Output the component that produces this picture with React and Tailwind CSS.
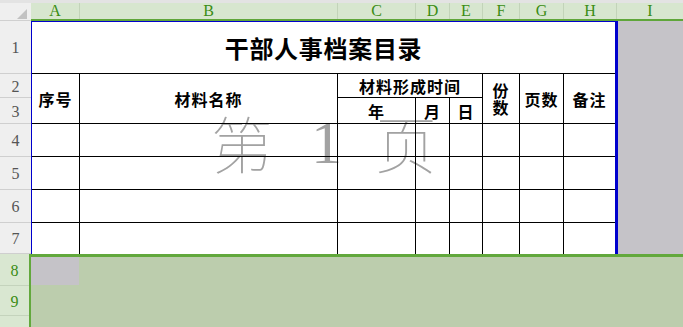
export default function App() {
  const headers = [
    { l: 'A', w: 'w-[49px]' },
    { l: 'B', w: 'w-[258px]' },
    { l: 'C', w: 'w-[78px]' },
    { l: 'D', w: 'w-[34px]' },
    { l: 'E', w: 'w-[33px]' },
    { l: 'F', w: 'w-[37px]' },
    { l: 'G', w: 'w-[44px]' },
    { l: 'H', w: 'w-[53px]' },
  ];
  const rowHeads = [
    { n: '1', h: 'h-[53px]' },
    { n: '2', h: 'h-[24px]' },
    { n: '3', h: 'h-[26px]' },
    { n: '4', h: 'h-[33px]' },
    { n: '5', h: 'h-[33px]' },
    { n: '6', h: 'h-[33px]' },
    { n: '7', h: 'h-[31px]' },
  ];
  const cjk = "font-['Noto_Sans_CJK_SC',sans-serif]";
  const lbl = "font-['Liberation_Serif',serif]";
  const cell = 'border-r border-b border-black';
  const head = `flex items-center justify-center text-[16px] font-bold tracking-[1px] text-black ${cjk}`;
  const bodyRows = [4, 5, 6, 7];
  const rowStart = { 4: 'row-start-4', 5: 'row-start-5', 6: 'row-start-6', 7: 'row-start-7' };

  return (
    <div className="relative w-[683px] h-[327px] overflow-hidden bg-white">
      {/* watermark (painted under the grid lines) */}
      <div className="absolute z-0 left-[211px] top-[111px] flex items-start text-[62px] leading-none text-[#a2a2a2] pointer-events-none">
        <span className={`${cjk} font-thin`}>第</span>
        <span className="ml-[38px] font-['Liberation_Serif',serif] font-normal">1</span>
        <span className={`ml-[33px] ${cjk} font-thin`}>页</span>
      </div>

      {/* top strip */}
      <div className="h-[3px] bg-[#e3e3e3]" />
      {/* column header */}
      <div className="flex h-[18px]">
        <div className="w-[31px] h-full bg-[#efefef] border-b border-[#d0d0d0] flex items-start justify-end pr-[4px] pt-[6px]">
          <svg width="10" height="10" viewBox="0 0 10 10">
            <polygon points="10,0 10,10 0,10" fill="#c2c2c2" />
          </svg>
        </div>
        <div className="flex flex-1 bg-[#d7e6cf] border-b-2 border-[#5fa63a]">
          {headers.map((c) => (
            <div
              key={c.l}
              className={`${c.w} h-full border-r border-[#c2d3b9] flex items-center justify-center text-[16px] leading-none text-[#3a8c14] ${lbl}`}
            >
              {c.l}
            </div>
          ))}
          <div className={`flex-1 h-full flex items-center justify-center text-[16px] leading-none text-[#3a8c14] ${lbl}`}>
            I
          </div>
        </div>
      </div>

      {/* rows 1-7 */}
      <div className="flex h-[233px]">
        <div className="w-[31px] flex flex-col bg-[#efefef]">
          {rowHeads.map((r) => (
            <div
              key={r.n}
              className={`${r.h} border-b border-[#cfcfcf] flex items-center justify-center pt-[2px] text-[16px] leading-none text-[#555] ${lbl}`}
            >
              {r.n}
            </div>
          ))}
        </div>

        <div className="relative z-10 w-[587px] border-l border-t border-r-[3px] border-l-[#0000cc] border-t-[#0000cc] border-r-[#0000cc] grid grid-cols-[48px_258px_78px_34px_33px_37px_44px_51px] grid-rows-[52px_24px_26px_33px_33px_33px_31px]">
          <div className={`col-start-1 col-span-8 row-start-1 border-b border-black flex items-center justify-center text-[24px] font-bold tracking-[0.7px] text-black ${cjk}`}>
            干部人事档案目录
          </div>
          <div className={`col-start-1 row-start-2 row-span-2 ${cell} ${head}`}>序号</div>
          <div className={`col-start-2 row-start-2 row-span-2 ${cell} ${head}`}>材料名称</div>
          <div className={`col-start-3 col-span-3 row-start-2 ${cell} ${head}`}>材料形成时间</div>
          <div className={`col-start-6 row-start-2 row-span-2 ${cell} ${head} flex-col leading-[17px]`}>
            <span>份</span>
            <span>数</span>
          </div>
          <div className={`col-start-7 row-start-2 row-span-2 ${cell} ${head}`}>页数</div>
          <div className={`col-start-8 row-start-2 row-span-2 border-b border-black ${head}`}>备注</div>
          <div className={`col-start-3 row-start-3 ${cell} ${head}`}>年</div>
          <div className={`col-start-4 row-start-3 ${cell} ${head}`}>月</div>
          <div className={`col-start-5 row-start-3 ${cell} ${head}`}>日</div>
          {bodyRows.map((r) => {
            const b = r === 7 ? '' : 'border-b';
            const rs = rowStart[r];
            return [
              <div key={`${r}a`} className={`col-start-1 ${rs} border-r ${b} border-black`} />,
              <div key={`${r}b`} className={`col-start-2 ${rs} border-r ${b} border-black`} />,
              <div key={`${r}c`} className={`col-start-3 ${rs} border-r ${b} border-black`} />,
              <div key={`${r}d`} className={`col-start-4 ${rs} border-r ${b} border-black`} />,
              <div key={`${r}e`} className={`col-start-5 ${rs} border-r ${b} border-black`} />,
              <div key={`${r}f`} className={`col-start-6 ${rs} border-r ${b} border-black`} />,
              <div key={`${r}g`} className={`col-start-7 ${rs} border-r ${b} border-black`} />,
              <div key={`${r}h`} className={`col-start-8 ${rs} ${b} border-black`} />,
            ];
          })}
        </div>

        <div className="flex-1 bg-[#c5c3c8]" />
      </div>

      {/* rows 8-10 selection */}
      <div className="flex h-[73px]">
        <div className="w-[29px] flex flex-col bg-[#d9e7d1]">
          <div className={`h-[32px] border-b border-[#c4d3bc] flex items-center justify-center pt-[3px] text-[16px] leading-none text-[#3a8c14] ${lbl}`}>8</div>
          <div className={`h-[30px] border-b border-[#c4d3bc] flex items-center justify-center pt-[2px] text-[16px] leading-none text-[#3a8c14] ${lbl}`}>9</div>
          <div className="flex-1" />
        </div>
        <div className="flex-1 border-l-2 border-t-[3px] border-[#62a83c] bg-[#bccdad]">
          <div className="w-[48px] h-[28px] bg-[#c5c3c8]" />
        </div>
      </div>
    </div>
  );
}
